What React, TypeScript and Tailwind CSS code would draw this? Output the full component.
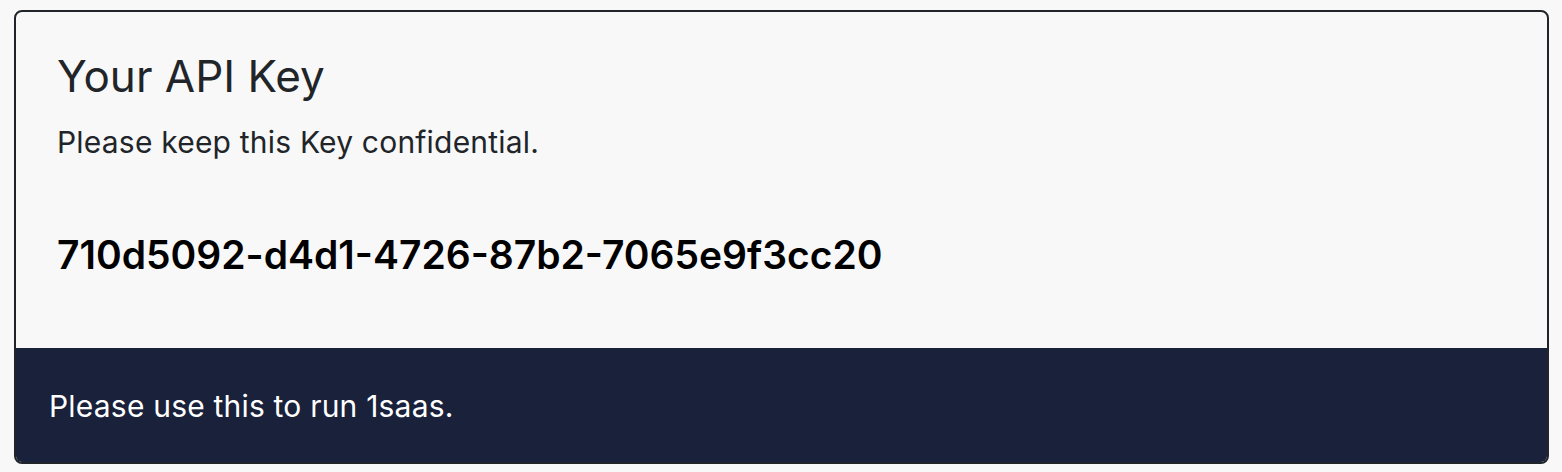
export default function App() {
  return (
    <div
      className="w-[1562px] h-[472px] bg-[#f8f8f8] pt-[10px] pl-[14px]"
      style={{ fontFamily: 'Inter, "Noto Sans", sans-serif' }}
    >
      <div className="w-[1535px] h-[454px] border-2 border-[#212529] rounded-[8px] overflow-hidden flex flex-col bg-[#f8f8f8]">
        <div className="flex-1 pl-[41px] pt-[38px]">
          <h3 className="text-[44px] leading-[52px] text-[#212529] font-normal">Your API Key</h3>
          <p className="mt-[22px] text-[30px] leading-[36px] tracking-[0.2px] text-[#212529]">Please keep this Key confidential.</p>
          <p className="mt-[72px] text-[39px] leading-[46px] font-semibold text-black">710d5092-d4d1-4726-87b2-7065e9f3cc20</p>
        </div>
        <div className="h-[114px] bg-[#19213b] pl-[33px] pt-[40px]">
          <p className="text-[30px] leading-[36px] tracking-[0.2px] text-white">Please use this to run 1saas.</p>
        </div>
      </div>
    </div>
  );
}
